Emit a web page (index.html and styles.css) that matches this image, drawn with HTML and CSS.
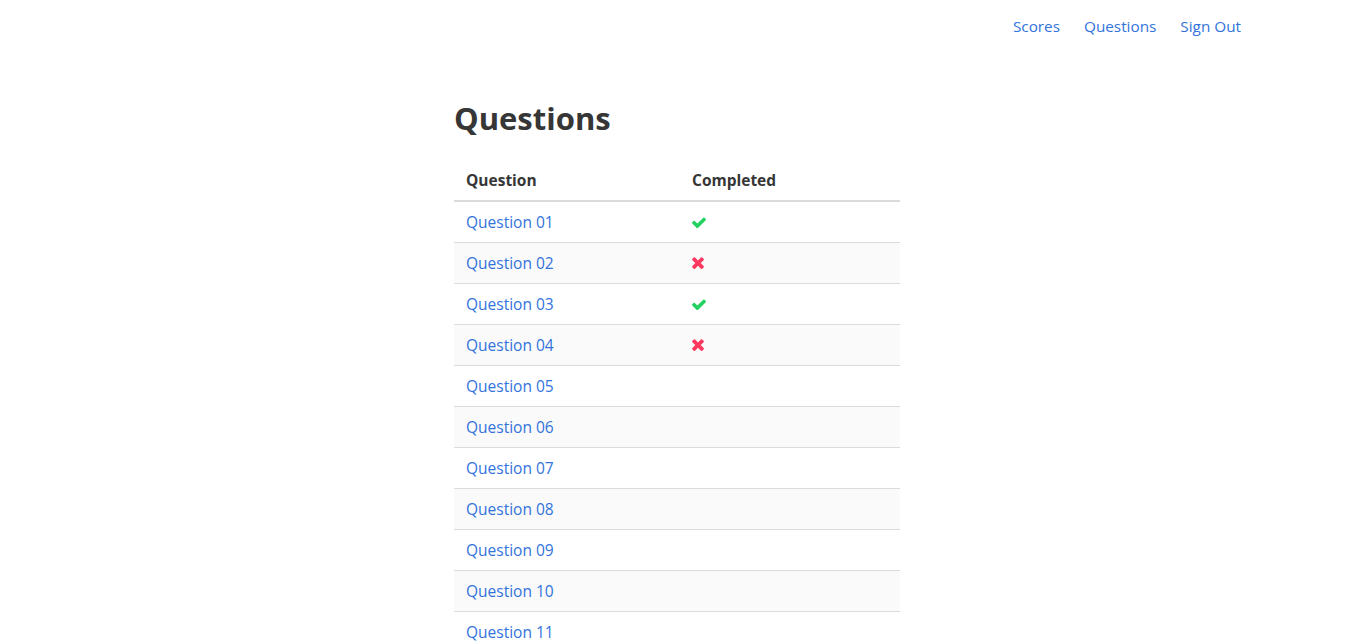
FILE: index.html
```html
<!DOCTYPE html>
<html lang="en">
<head>
<meta charset="utf-8">
<title>Questions</title>
<link rel="stylesheet" href="styles.css">
</head>
<body>
<header class="topbar">
  <nav class="nav">
    <a href="#" class="nav-link">Scores</a>
    <a href="#" class="nav-link">Questions</a>
    <a href="#" class="nav-link">Sign Out</a>
  </nav>
</header>
<main class="main">
  <h1 class="title">Questions</h1>
  <table class="qtable">
    <thead>
      <tr><th class="col-q">Question</th><th>Completed</th></tr>
    </thead>
    <tbody>
      <tr><td><a href="#">Question 01</a></td><td><svg class="ic ok" viewBox="121 336 1550 1120" width="14" height="11"><path d="M1671 566q0 40-28 68l-724 724-136 136q-28 28-68 28t-68-28l-136-136-362-362q-28-28-28-68t28-68l136-136q28-28 68-28t68 28l294 295 656-657q28-28 68-28t68 28l136 136q28 28 28 68z"/></svg></td></tr>
      <tr><td><a href="#">Question 02</a></td><td><svg class="ic bad" viewBox="302 342 1188 1212" width="12" height="12"><path d="M1490 1322q0 40-28 68l-136 136q-28 28-68 28t-68-28l-294-294-294 294q-28 28-68 28t-68-28l-136-136q-28-28-28-68t28-68l294-294-294-294q-28-28-28-68t28-68l136-136q28-28 68-28t68 28l294 294 294-294q28-28 68-28t68 28l136 136q28 28 28 68t-28 68l-294 294 294 294q28 28 28 68z"/></svg></td></tr>
      <tr><td><a href="#">Question 03</a></td><td><svg class="ic ok" viewBox="121 336 1550 1120" width="14" height="11"><path d="M1671 566q0 40-28 68l-724 724-136 136q-28 28-68 28t-68-28l-136-136-362-362q-28-28-28-68t28-68l136-136q28-28 68-28t68 28l294 295 656-657q28-28 68-28t68 28l136 136q28 28 28 68z"/></svg></td></tr>
      <tr><td><a href="#">Question 04</a></td><td><svg class="ic bad" viewBox="302 342 1188 1212" width="12" height="12"><path d="M1490 1322q0 40-28 68l-136 136q-28 28-68 28t-68-28l-294-294-294 294q-28 28-68 28t-68-28l-136-136q-28-28-28-68t28-68l294-294-294-294q-28-28-28-68t28-68l136-136q28-28 68-28t68 28l294 294 294-294q28-28 68-28t68 28l136 136q28 28 28 68t-28 68l-294 294 294 294q28 28 28 68z"/></svg></td></tr>
      <tr><td><a href="#">Question 05</a></td><td></td></tr>
      <tr><td><a href="#">Question 06</a></td><td></td></tr>
      <tr><td><a href="#">Question 07</a></td><td></td></tr>
      <tr><td><a href="#">Question 08</a></td><td></td></tr>
      <tr><td><a href="#">Question 09</a></td><td></td></tr>
      <tr><td><a href="#">Question 10</a></td><td></td></tr>
      <tr><td><a href="#">Question 11</a></td><td></td></tr>
      <tr><td><a href="#">Question 12</a></td><td></td></tr>
    </tbody>
  </table>
</main>
</body>
</html>
```

FILE: styles.css
```css
html, body {
  margin: 0;
  padding: 0;
  background: #fff;
}
body {
  font-family: "Open Sans", "Noto Sans", sans-serif;
  font-size: 15.5px;
  color: #4a4a4a;
}
a {
  color: #3273dc;
  text-decoration: none;
}
.topbar {
  height: 52px;
  display: flex;
  justify-content: flex-end;
  align-items: center;
  padding-right: 113px;
}
.nav {
  display: flex;
  gap: 24px;
}
.nav-link {
  font-size: 15.3px;
  line-height: 20px;
}
.main {
  width: 446px;
  margin: 0 auto;
}
.title {
  font-size: 31px;
  font-weight: 700;
  line-height: 40px;
  margin: 46px 0 22px;
  color: #363636;
}
.qtable {
  width: 100%;
  border-collapse: collapse;
}
.qtable th,
.qtable td {
  text-align: left;
  padding: 8px 12px;
  line-height: 24px;
  vertical-align: middle;
}
.qtable th {
  font-weight: 700;
  color: #363636;
  border-bottom: 2px solid #dbdbdb;
}
.col-q {
  width: 202px;
}
.qtable td {
  border-top: 1px solid #dbdbdb;
}
.qtable tbody tr:first-child td {
  border-top: 0;
}
.qtable tbody tr:nth-child(even) {
  background: #fafafa;
}
.ic {
  display: block;
}
.ok { fill: #23d160; }
.bad { fill: #ff3860; }
```
